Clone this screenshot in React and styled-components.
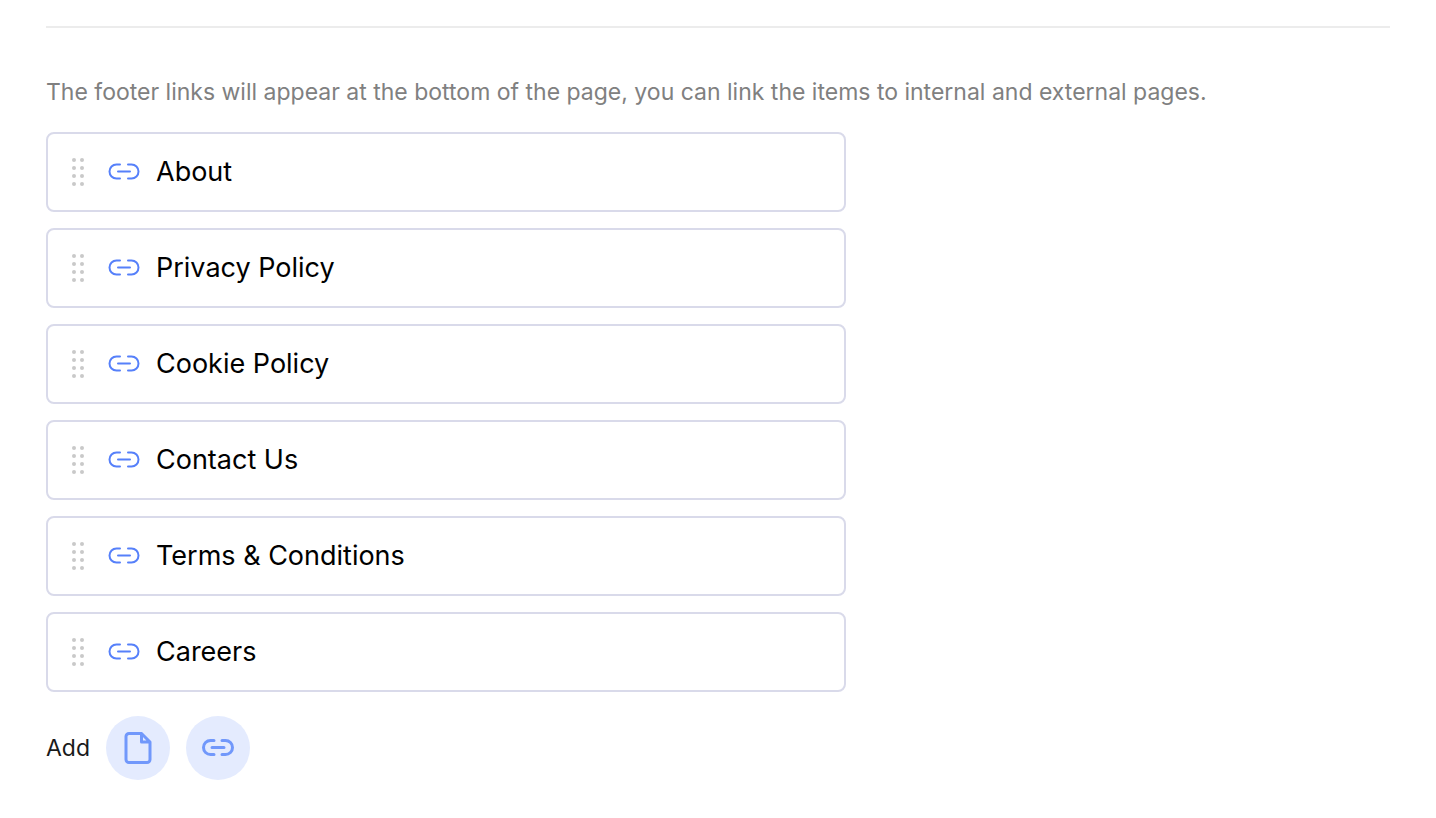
import React from "react";
import styled, { createGlobalStyle } from "styled-components";

const GlobalStyle = createGlobalStyle`
  *, *::before, *::after { box-sizing: border-box; }
  body {
    margin: 0;
    background: #ffffff;
    font-family: Inter, "Liberation Sans", Arial, sans-serif;
  }
`;

const Section = styled.section`
  padding: 26px 46px 38px;
`;

const Divider = styled.hr`
  margin: 0;
  border: 0;
  height: 2px;
  background: #ececec;
`;

const Description = styled.p`
  margin: 48px 0 24px;
  font-size: 23px;
  line-height: 32px;
  color: #808080;
`;

const LinkList = styled.ul`
  display: flex;
  flex-direction: column;
  gap: 16px;
  max-width: 800px;
  margin: 0;
  padding: 0;
  list-style: none;
`;

const LinkItem = styled.li`
  display: flex;
  align-items: center;
  padding: 20px 22px;
  border: 2px solid #d9daea;
  border-radius: 8px;
  background: #ffffff;
`;

const DragHandle = styled.button`
  display: flex;
  margin-right: 22px;
  padding: 0 2px;
  border: 0;
  background: none;
  cursor: grab;
`;

const LinkName = styled.span`
  margin-left: 16px;
  font-size: 27px;
  line-height: 36px;
  color: #000000;
`;

const AddBar = styled.div`
  display: flex;
  align-items: center;
  gap: 16px;
  margin-top: 24px;
`;

const AddLabel = styled.span`
  min-width: 44px;
  font-size: 23px;
  line-height: 32px;
  color: #1a1a1a;
`;

const AddButton = styled.button`
  display: flex;
  align-items: center;
  justify-content: center;
  width: 64px;
  height: 64px;
  padding: 0;
  border: 0;
  border-radius: 50%;
  background: #e4ebfe;
  color: #7198fb;
  cursor: pointer;
`;

const Icon = styled.svg`
  display: block;
  flex: none;
  fill: none;
  stroke: currentColor;
  stroke-linecap: round;
  stroke-linejoin: round;
`;

const RowIcon = styled(Icon)`
  color: #5680fa;
`;

const DotsIcon = () => (
  <svg width="12" height="28" viewBox="0 0 12 28" fill="#c9c9c9" aria-hidden="true">
    {[2, 10, 18, 26].map((y) => (
      <React.Fragment key={y}>
        <circle cx="2" cy={y} r="2" />
        <circle cx="10" cy={y} r="2" />
      </React.Fragment>
    ))}
  </svg>
);

const LinkIcon = ({ as: Component = Icon, weight }) => (
  <Component width="32" height="18" viewBox="0 0 32 18" strokeWidth={weight} aria-hidden="true">
    <path d="M12 1.5H8.5a7 7 0 0 0 0 14H12M20 1.5h3.5a7 7 0 0 1 0 14H20M10 8.5h12" />
  </Component>
);

const FileIcon = () => (
  <Icon width="28" height="32" viewBox="0 0 28 32" strokeWidth="3" aria-hidden="true">
    <path d="M17.5 1.5H5A3 3 0 0 0 2 4.500V27.500A3 3 0 0 0 5 30.500H23A3 3 0 0 0 26 27.500V10L17.500 1.500V10H26" />
  </Icon>
);

const links = [
  "About",
  "Privacy Policy",
  "Cookie Policy",
  "Contact Us",
  "Terms & Conditions",
  "Careers",
];

export default function App() {
  return (
    <>
      <GlobalStyle />
      <Section>
        <Divider />
        <Description>
          The footer links will appear at the bottom of the page, you can link the items to internal and external pages.
        </Description>
        <LinkList>
          {links.map((name) => (
            <LinkItem key={name}>
              <DragHandle type="button" aria-label={`Reorder ${name}`}>
                <DotsIcon />
              </DragHandle>
              <LinkIcon as={RowIcon} weight="2" />
              <LinkName>{name}</LinkName>
            </LinkItem>
          ))}
        </LinkList>
        <AddBar>
          <AddLabel>Add</AddLabel>
          <AddButton type="button" aria-label="Add page">
            <FileIcon />
          </AddButton>
          <AddButton type="button" aria-label="Add link">
            <LinkIcon weight="3" />
          </AddButton>
        </AddBar>
      </Section>
    </>
  );
}
